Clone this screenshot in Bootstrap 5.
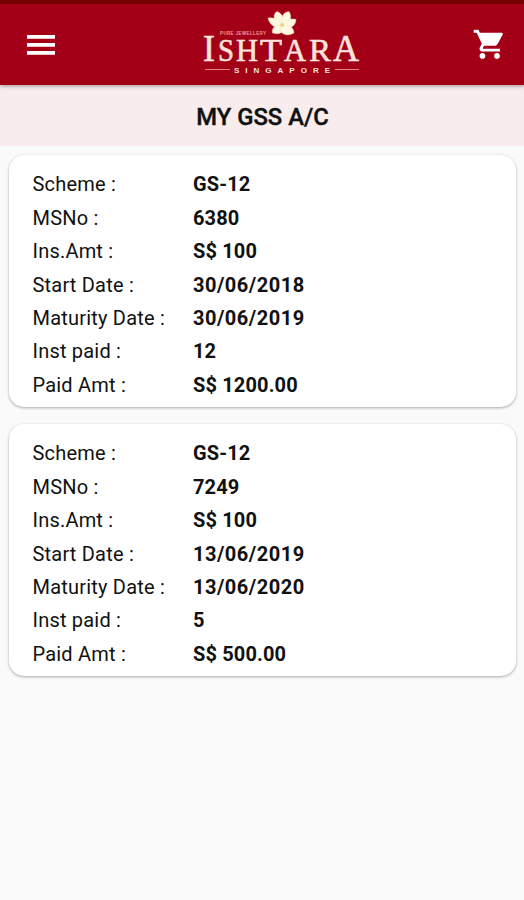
<!DOCTYPE html>
<html lang="en">
<head>
<meta charset="utf-8">
<meta name="viewport" content="width=device-width, initial-scale=1">
<title>My GSS A/C</title>
<link href="https://cdn.jsdelivr.net/npm/bootstrap@5.3.0/dist/css/bootstrap.min.css" rel="stylesheet">
<style>
body{font-family:Roboto,"Liberation Sans",sans-serif;background:#fafafa;color:#111;min-height:900px}
.app-bar{height:85px;background:#a30017;border-top:4px solid #720000;padding:0 19px 0 27px;box-shadow:0 1px 4px rgba(0,0,0,.4);z-index:2}
.bar-btn{line-height:0}
.cart-btn{margin-top:1px}
.brand-logo{margin:0 0 5px 33px}
.page-title{height:61px;background:#f8ecec;font-size:23.8px;font-weight:500;line-height:65px;-webkit-text-stroke:.4px #111;padding-left:1px}
.scheme-list{padding:9px 8px 0 9px;gap:17px}
.scheme-card{height:252px;border-radius:15px;background:#fff;padding:13.2px 23px 0 23.5px;box-shadow:0 1px 3px rgba(0,0,0,.33)}
.scheme-grid{grid-template-columns:160.5px 1fr;grid-auto-rows:33.45px;font-size:20px;line-height:33.5px;letter-spacing:.14px}
.scheme-grid dt{font-weight:400;letter-spacing:.2px}
.scheme-grid dd{font-weight:700}
.scheme-grid .date-value{letter-spacing:.5px}
</style>
</head>
<body>
<header class="app-bar d-flex align-items-center justify-content-between position-relative">
  <button class="bar-btn btn p-0 border-0" aria-label="Menu">
    <svg width="28" height="20" viewBox="0 0 28 20" fill="#fff"><path d="M0 0h28v3.700H0zM0 8h28v3.700H0zM0 16h28v3.700H0z"/></svg>
  </button>
  <svg class="brand-logo" width="162" height="68" viewBox="200 8 162 68" fill="#fbe3dc" font-family="Liberation Serif, serif" role="img" aria-label="Ishtara Singapore">
    <g fill="#fff9e4" stroke="#e6d3ae" stroke-width=".4">
      <path d="M278 26C273 19 273 14 277 11.500C282 13 285 19 282 25z"/>
      <path d="M282 24C281 17 283 12 289 11.500C292 16 291 22 286 26z"/>
      <path d="M281 28C274 28 269 24 268 18C275 17 281 20 283 26z"/>
      <path d="M282 27C285 20 290 18 296 19.500C296 25 291 29 284 29z"/>
      <path d="M283 26C277 24 271 27 272.500 33C279 35 283 33 285 28z"/>
      <path d="M281 26C287 23 294 27 294 33C288 36.500 282 35 280 30z"/>
    </g>
    <circle cx="282" cy="25" r="2" fill="#e8d68a"/>
    <text x="220" y="34.500" font-size="4.5" font-weight="700" font-family="Liberation Sans, sans-serif" textLength="46" fill="#eb9c98">PURE JEWELLERY</text>
    <g stroke="#fbe3dc" stroke-width=".6">
      <text x="203" y="60.5" font-size="37" textLength="12" lengthAdjust="spacingAndGlyphs">I</text>
      <text x="218" y="60.5" font-size="32" textLength="16" lengthAdjust="spacingAndGlyphs">S</text>
      <text x="236" y="60.5" font-size="32" textLength="22" lengthAdjust="spacingAndGlyphs">H</text>
      <text x="260" y="60.5" font-size="32" textLength="22" lengthAdjust="spacingAndGlyphs">T</text>
      <text x="284" y="60.5" font-size="32" textLength="22" lengthAdjust="spacingAndGlyphs">A</text>
      <text x="309" y="60.5" font-size="32" textLength="22" lengthAdjust="spacingAndGlyphs">R</text>
      <text x="333" y="60.5" font-size="37" textLength="26" lengthAdjust="spacingAndGlyphs">A</text>
    </g>
    <path d="M205 69.500h25M335 69.500h24" stroke="#e0837e" stroke-width="1"/>
    <text x="234" y="72.5" font-size="8" font-weight="700" font-family="Liberation Sans, sans-serif" textLength="96">SINGAPORE</text>
  </svg>
  <button class="bar-btn cart-btn btn p-0 border-0" aria-label="Cart">
    <svg width="32" height="32" viewBox="0.5 1.5 22 22" fill="#fff"><path d="M7 18c-1.1 0-1.99.9-1.99 2S5.900 22 7 22s2-.9 2-2-.9-2-2-2zM1 2v2h2l3.600 7.590-1.350 2.450c-.16.28-.25.61-.25.96 0 1.100.9 2 2 2h12v-2H7.420c-.14 0-.25-.11-.25-.25l.03-.12.9-1.630h7.450c.75 0 1.410-.41 1.750-1.030l3.580-6.490c.08-.14.12-.31.12-.48 0-.55-.45-1-1-1H5.210l-.94-2H1zm16 16c-1.100 0-1.990.9-1.990 2s.89 2 1.990 2 2-.9 2-2-.9-2-2-2z"/></svg>
  </button>
</header>
<h1 class="page-title text-center mb-0">MY GSS A/C</h1>
<main class="scheme-list d-flex flex-column">
  <section class="scheme-card">
    <dl class="scheme-grid d-grid mb-0">
      <dt>Scheme :</dt><dd class="mb-0">GS-12</dd>
      <dt>MSNo :</dt><dd class="mb-0">6380</dd>
      <dt>Ins.Amt :</dt><dd class="mb-0">S$ 100</dd>
      <dt>Start Date :</dt><dd class="date-value mb-0">30/06/2018</dd>
      <dt>Maturity Date :</dt><dd class="date-value mb-0">30/06/2019</dd>
      <dt>Inst paid :</dt><dd class="mb-0">12</dd>
      <dt>Paid Amt :</dt><dd class="mb-0">S$ 1200.00</dd>
    </dl>
  </section>
  <section class="scheme-card">
    <dl class="scheme-grid d-grid mb-0">
      <dt>Scheme :</dt><dd class="mb-0">GS-12</dd>
      <dt>MSNo :</dt><dd class="mb-0">7249</dd>
      <dt>Ins.Amt :</dt><dd class="mb-0">S$ 100</dd>
      <dt>Start Date :</dt><dd class="date-value mb-0">13/06/2019</dd>
      <dt>Maturity Date :</dt><dd class="date-value mb-0">13/06/2020</dd>
      <dt>Inst paid :</dt><dd class="mb-0">5</dd>
      <dt>Paid Amt :</dt><dd class="mb-0">S$ 500.00</dd>
    </dl>
  </section>
</main>
<script src="https://cdn.jsdelivr.net/npm/bootstrap@5.3.0/dist/js/bootstrap.bundle.min.js"></script>
</body>
</html>
